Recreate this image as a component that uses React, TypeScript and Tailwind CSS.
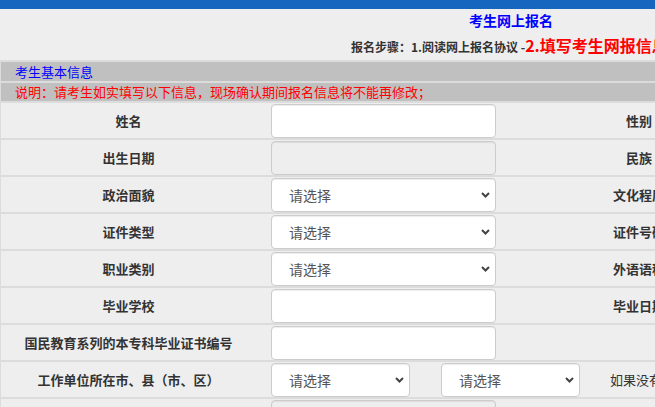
import React from "react";

const font = { fontFamily: '"Noto Sans CJK SC", "Liberation Sans", sans-serif' };

const Chevron = () => (
  <svg width="9" height="6" viewBox="0 0 9 6" className="shrink-0">
    <polyline points="1,1 4.5,4.5 8,1" fill="none" stroke="#444" strokeWidth="2" />
  </svg>
);

const TextInput = ({ disabled = false }: { disabled?: boolean }) => (
  <div
    className={`h-[34px] w-[225px] self-center rounded-[4px] border border-[#cccccc] shadow-[inset_0_1px_1px_rgba(0,0,0,0.075)] ${
      disabled ? "bg-[#eeeeee]" : "bg-white"
    }`}
  />
);

const Select = ({ width = "w-[225px]" }: { width?: string }) => (
  <div
    className={`${width} flex h-[34px] items-center justify-between self-center rounded-[4px] border border-[#cccccc] bg-white pl-[17px] pr-[5px] shadow-[inset_0_1px_1px_rgba(0,0,0,0.075)]`}
  >
    <span className="pt-[1px] text-[14px] text-[#555555]">请选择</span>
    <Chevron />
  </div>
);

const rows: { label: string; field: "input" | "disabled" | "select"; right: string }[] = [
  { label: "姓名", field: "input", right: "性别" },
  { label: "出生日期", field: "disabled", right: "民族" },
  { label: "政治面貌", field: "select", right: "文化程度" },
  { label: "证件类型", field: "select", right: "证件号码" },
  { label: "职业类别", field: "select", right: "外语语种" },
  { label: "毕业学校", field: "input", right: "毕业日期" },
  { label: "国民教育系列的本专科毕业证书编号", field: "input", right: "" },
];

export default function App() {
  return (
    <div className="h-[407px] w-full overflow-hidden bg-[#eeeeee]" style={font}>
      {/* top bar */}
      <div className="h-[9px] bg-[#1666c0]" />

      {/* header */}
      <div className="mt-[1px] whitespace-nowrap pl-[469px] text-[14px] font-bold leading-[20px] text-[#0000ff]">
        考生网上报名
      </div>
      <div className="mt-[3px] h-[24px] whitespace-nowrap pl-[351px] leading-[24px] text-[#333333]">
        <span className="text-[12px] font-bold">报名步骤：1.阅读网上报名协议 -</span>
        <span className="text-[16px] font-bold text-[#ff0000]">2.填写考生网报信息</span>
      </div>

      {/* form table */}
      <div className="mt-[3px] flex w-[1100px] flex-col gap-[2px] bg-[#dcdcdc] pl-px pt-[2px]">
        <div className="h-[19px] bg-[#c0c0c0] pl-[14px] text-[13px] leading-[19px] text-[#0000ff]">
          考生基本信息
        </div>
        <div className="h-[18px] bg-[#c0c0c0] pl-[14px] text-[13px] leading-[18px] text-[#ff0000]">
          说明：请考生如实填写以下信息，现场确认期间报名信息将不能再修改；
        </div>

        {rows.map((row) => (
          <div key={row.label} className="flex h-[35px] bg-[#eeeeee]">
            <div className="flex w-[255px] shrink-0 items-center justify-center text-[13px] font-bold text-[#333333]">
              {row.label}
            </div>
            <div className="flex w-[255px] shrink-0 pl-[15px]">
              {row.field === "select" ? (
                <Select />
              ) : (
                <TextInput disabled={row.field === "disabled"} />
              )}
            </div>
            <div className="flex w-[256px] shrink-0 items-center justify-center text-[13px] font-bold text-[#333333]">
              {row.right}
            </div>
          </div>
        ))}

        <div className="flex h-[35px] bg-[#eeeeee]">
          <div className="flex w-[255px] shrink-0 items-center justify-center text-[13px] font-bold text-[#333333]">
            工作单位所在市、县（市、区）
          </div>
          <div className="flex shrink-0 gap-[31px] pl-[15px]">
            <Select width="w-[139px]" />
            <Select width="w-[139px]" />
          </div>
          <div className="flex items-center whitespace-nowrap pl-[30px] text-[13px] text-[#333333]">
            如果没有工作单位，请选择户籍所在地
          </div>
        </div>

        <div className="flex h-[35px] bg-[#eeeeee]">
          <div className="w-[255px] shrink-0" />
          <div className="flex w-[255px] shrink-0 pl-[15px]">
            <TextInput disabled />
          </div>
        </div>
      </div>
    </div>
  );
}
